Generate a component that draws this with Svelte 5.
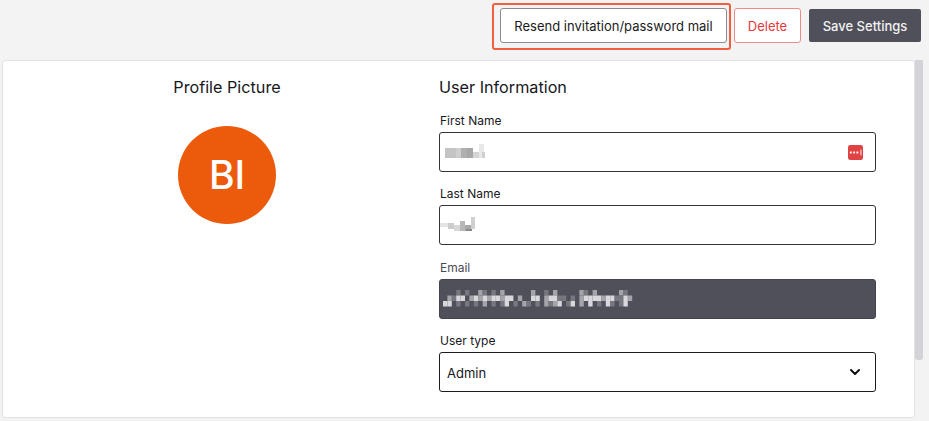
<script>
  const pixFirst = [[0,4,11,10,'#c4c4c4'],[11,4,5,10,'#cfcfcf'],[16,4,6,10,'#b0b0b0'],[22,4,6,10,'#a8a8a8'],[28,8,9,6,'#d4d4d4'],[34,0,5,14,'#e8e8e8'],[37,8,3,6,'#cfcfcf']];
  const pixLast = [[0,6,8,4,'#e4e4e4'],[8,6,6,6,'#cccccc'],[14,8,6,6,'#d8d8d8'],[20,4,5,10,'#b8b8b8'],[25,8,6,6,'#a8a8a8'],[31,0,4,12,'#d0d0d0'],[26,12,6,2,'#8a8a8a']];
  const shades = { '1': '#77777f', '2': '#a4a4aa', '3': '#d8d8dc' };
  const rows = [
    '...1.1..21.1.2......2..1.2.....21.2.....21.',
    '.2133.2323233233.2..33.23311.1.233332331132',
    '33.1.1.1.2.1.13.1.21.1.2123.13.2.3.1.31.13'
  ];
  const pixEmail = rows.flatMap((row, r) =>
    [...row].flatMap((v, i) => (v === '.' ? [] : [[i * 4.4, r * 5.5, 4.4, 5.5, shades[v]]]))
  );
</script>

<div class="page">
  <header class="actions">
    <div class="highlight">
      <button class="btn resend">Resend invitation/password mail</button>
    </div>
    <button class="btn delete">Delete</button>
    <button class="btn save">Save Settings</button>
  </header>

  <div class="body">
    <main class="card">
      <section class="picture">
        <h2>Profile Picture</h2>
        <div class="avatar">BI</div>
      </section>
      <section class="info">
        <h2>User Information</h2>
        <div class="field">
          <label for="fn">First Name</label>
          <div class="input" id="fn">
            <svg class="pix" width="40" height="16" aria-hidden="true">
              {#each pixFirst as [x, y, w, h, c]}<rect {x} {y} width={w} height={h} fill={c} />{/each}
            </svg>
            <svg class="pw" width="15" height="15" viewBox="0 0 16 16" aria-hidden="true">
              <rect width="16" height="16" rx="2.5" fill="#e04343" />
              <rect x="2" y="7" width="2" height="2" fill="#fff" />
              <rect x="5.5" y="7" width="2" height="2" fill="#fff" />
              <rect x="9" y="7" width="2" height="2" fill="#fff" />
              <rect x="13" y="5" width="1.6" height="6" fill="#f2b5b5" />
            </svg>
          </div>
        </div>
        <div class="field">
          <label for="ln">Last Name</label>
          <div class="input" id="ln">
            <svg class="pix flush" width="36" height="16" aria-hidden="true">
              {#each pixLast as [x, y, w, h, c]}<rect {x} {y} width={w} height={h} fill={c} />{/each}
            </svg>
          </div>
        </div>
        <div class="field">
          <label class="muted" for="em">Email</label>
          <div class="input disabled" id="em">
            <svg class="pix email" width="190" height="17" aria-hidden="true">
              {#each pixEmail as [x, y, w, h, c]}<rect {x} {y} width={w} height={h} fill={c} />{/each}
            </svg>
          </div>
        </div>
        <div class="field">
          <label for="ut">User type</label>
          <div class="input select" id="ut">
            <span class="value">Admin</span>
            <svg width="12" height="8" viewBox="0 0 12 8" aria-hidden="true">
              <path d="M2 2l4 4 4-4" fill="none" stroke="#111" stroke-width="2" stroke-linecap="round" stroke-linejoin="round" />
            </svg>
          </div>
        </div>
      </section>
    </main>
    <div class="scrollbar"><div class="thumb"></div></div>
  </div>
</div>

<style>
  :global(body) {
    background: #f3f3f3;
    font-family: Inter, "Liberation Sans", sans-serif;
    overflow: hidden;
  }
  .page {
    width: 929px;
    height: 421px;
    overflow: hidden;
  }
  .actions {
    height: 60px;
    box-sizing: border-box;
    display: flex;
    justify-content: flex-end;
    align-items: flex-start;
    padding: 3px 8px 0 0;
  }
  .highlight {
    box-sizing: border-box;
    width: 239px;
    height: 47px;
    border: 2px solid #f0603f;
    border-radius: 3px;
    padding: 3px 2px 0 6px;
    margin-right: 3px;
  }
  .btn {
    box-sizing: border-box;
    font-family: inherit;
    font-size: 13px;
    font-weight: 500;
    height: 35px;
    border-radius: 3px;
    padding: 0;
  }
  .resend {
    width: 227px;
    background: #fff;
    border: 1px solid #8b8b93;
    color: #1b1b20;
    font-weight: 400;
  }
  .delete {
    width: 67px;
    margin: 5px 8px 0 0;
    background: #fff;
    border: 1px solid #ee8a8a;
    color: #e5383b;
    font-weight: 400;
  }
  .save {
    width: 112px;
    height: 33px;
    margin-top: 6px;
    background: #50505a;
    border: 0;
    border-radius: 2px;
    color: #f2f2f2;
  }
  .body {
    display: flex;
    align-items: flex-start;
    padding-left: 2px;
  }
  .card {
    box-sizing: border-box;
    width: 913px;
    height: 358px;
    flex: none;
    background: #fff;
    border: 1px solid #e2e2e6;
    border-radius: 3px;
    display: flex;
  }
  .scrollbar {
    width: 14px;
    height: 361px;
    flex: none;
  }
  .thumb {
    width: 8px;
    height: 300px;
    background: #d3d3d8;
    border-radius: 0 0 3px 3px;
  }
  h2 {
    margin: 0;
    font-size: 16.2px;
    font-weight: 400;
    line-height: 20px;
    color: #17171c;
  }
  .picture {
    width: 448px;
    padding-top: 16px;
    display: flex;
    flex-direction: column;
    align-items: center;
    box-sizing: border-box;
  }
  .avatar {
    width: 98px;
    height: 98px;
    margin-top: 29px;
    border-radius: 50%;
    background: #ec5a0c;
    color: #fff;
    font-size: 39px;
    font-weight: 500;
    line-height: 98px;
    text-align: center;
  }
  .info {
    padding-top: 16px;
    margin-left: -12px;
    width: 437px;
    flex: none;
    box-sizing: border-box;
  }
  .info h2 {
    margin-bottom: 16px;
  }
  .field {
    margin-bottom: 14.33px;
  }
  label {
    display: block;
    font-size: 12px;
    line-height: 16px;
    margin-bottom: 3px;
    padding-left: 1px;
    color: #17171c;
  }
  label.muted {
    color: #4b4b55;
  }
  .input {
    box-sizing: border-box;
    height: 40px;
    width: 437px;
    background: #fff;
    border: 1px solid #34343a;
    border-radius: 3px;
    display: flex;
    align-items: center;
    justify-content: space-between;
  }
  .pix {
    margin-left: 5px;
  }
  .pix.flush {
    margin-left: 0;
  }
  .pix.email {
    margin-left: 3px;
  }
  .pw {
    margin-right: 12px;
  }
  .disabled {
    background: #50505a;
    border-color: #44444c;
  }
  .select {
    border-color: #1c1c20;
    padding: 0 14px 0 7px;
    font-size: 13px;
    color: #17171c;
  }
  .value {
    padding-top: 2px;
  }
</style>
